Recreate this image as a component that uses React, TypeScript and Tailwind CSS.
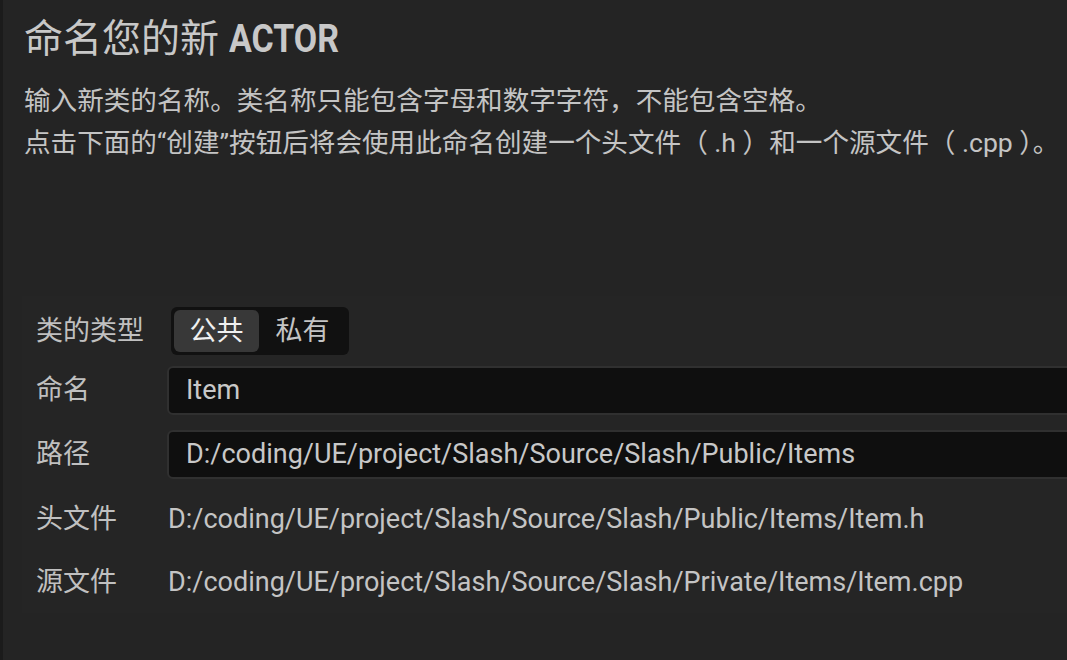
const font = { fontFamily: '"Roboto", "Noto Sans CJK SC", sans-serif' };

function Field({ value }: { value: string }) {
	return (
		<div className="flex h-[49px] flex-1 items-center rounded-[6px] border-2 border-[#303030] bg-[#0f0f0f] pl-[17px] text-[27px] text-[#c8c8c8]">
			{value}
		</div>
	);
}

function Row({ label, children, className }: { label: string; children: React.ReactNode; className?: string }) {
	return (
		<div className={`flex items-center ${className ?? ""}`}>
			<div className="w-[131px] shrink-0 text-[27px] text-[#c0c0c0]">{label}</div>
			{children}
		</div>
	);
}

export default function App() {
	return (
		<div className="flex h-[660px] w-[1067px] overflow-hidden bg-[#242424]" style={font}>
			<div className="w-[3px] shrink-0 bg-[#1b1b1b]" />
			<div className="flex min-w-0 flex-1 flex-col">
				<div className="pl-[21px] pt-[14px]">
					<h1 className="h-[50px] whitespace-nowrap text-[39px] leading-[50px] text-[#c8c8c8]">
						命名您的新{" "}
						<span className="inline-block origin-left scale-x-[0.87] font-bold">ACTOR</span>
					</h1>
					<p className="mt-[16px] whitespace-nowrap text-[26.6px] leading-[42px] text-[#c4c4c4]">
						输入新类的名称。类名称只能包含字母和数字字符，不能包含空格。
						<br />
						点击下面的“创建”按钮后将会使用此命名创建一个头文件（ .h ）和一个源文件（ .cpp ）。
					</p>
				</div>

				{/* form panel runs past the right edge, like the editor window */}
				<div className="-mr-[40px] ml-[19px] mt-[132px] flex h-[317px] flex-col bg-[#252525] pl-[14px] pt-[11px]">
					<Row label="类的类型">
						<div className="ml-[4px] flex h-[48px] items-center rounded-[6px] bg-[#111111] p-[3px] text-[27px]">
							<div className="flex h-full w-[85px] items-center justify-center rounded-[6px] bg-[#383838] text-[#f0f0f0]">
								公共
							</div>
							<div className="flex h-full w-[87px] items-center justify-center text-[#c4c4c4]">私有</div>
						</div>
					</Row>
					<Row label="命名" className="mt-[11px]">
						<Field value="Item" />
					</Row>
					<Row label="路径" className="mt-[15px]">
						<Field value="D:/coding/UE/project/Slash/Source/Slash/Public/Items" />
					</Row>
					<Row label="头文件" className="mt-[20px] h-[40px]">
						<div className="pl-[1px] text-[27px] text-[#c4c4c4]">D:/coding/UE/project/Slash/Source/Slash/Public/Items/Item.h</div>
					</Row>
					<Row label="源文件" className="mt-[23px] h-[40px]">
						<div className="pl-[1px] text-[27px] text-[#c4c4c4]">D:/coding/UE/project/Slash/Source/Slash/Private/Items/Item.cpp</div>
					</Row>
				</div>
			</div>
		</div>
	);
}
